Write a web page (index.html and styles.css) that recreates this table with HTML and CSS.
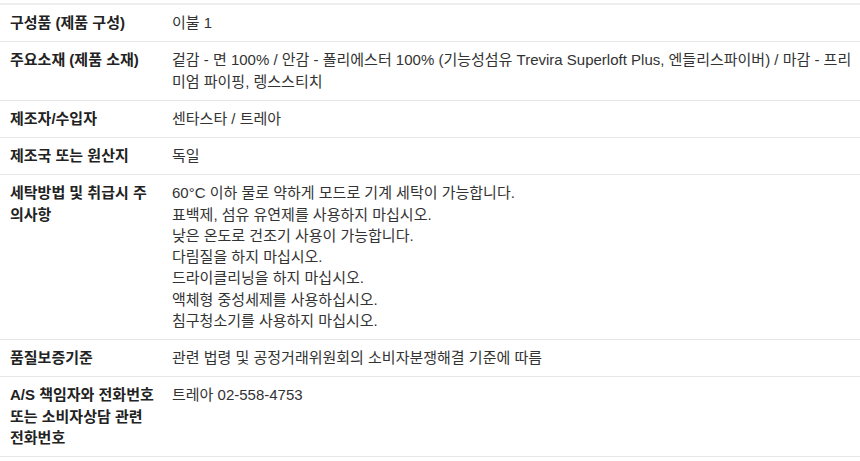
FILE: index.html
```html
<!DOCTYPE html>
<html lang="ko">
<head>
<meta charset="utf-8">
<link rel="stylesheet" href="styles.css">
</head>
<body>
<table class="spec">
  <tbody>
    <tr><th>구성품 (제품 구성)</th><td>이불 1</td></tr>
    <tr><th>주요소재 (제품 소재)</th><td>겉감 - 면 100% / 안감 - 폴리에스터 100% (기능성섬유 Trevira Superloft Plus, 엔들리스파이버) / 마감 - 프리미엄 파이핑, 렝스스티치</td></tr>
    <tr><th>제조자/수입자</th><td>센타스타 / 트레아</td></tr>
    <tr><th>제조국 또는 원산지</th><td>독일</td></tr>
    <tr><th>세탁방법 및 취급시 주의사항</th><td>60°C 이하 물로 약하게 모드로 기계 세탁이 가능합니다.<br>표백제, 섬유 유연제를 사용하지 마십시오.<br>낮은 온도로 건조기 사용이 가능합니다.<br>다림질을 하지 마십시오.<br>드라이클리닝을 하지 마십시오.<br>액체형 중성세제를 사용하십시오.<br>침구청소기를 사용하지 마십시오.</td></tr>
    <tr><th>품질보증기준</th><td>관련 법령 및 공정거래위원회의 소비자분쟁해결 기준에 따름</td></tr>
    <tr><th>A/S 책임자와 전화번호 또는 소비자상담 관련 전화번호</th><td>트레아 02-558-4753</td></tr>
  </tbody>
</table>
</body>
</html>
```
FILE: styles.css
```css
html, body {
  margin: 0;
  padding: 0;
  background: #fff;
}
body {
  padding-top: 3px;
  font-family: "Liberation Sans", Arial, "Noto Sans CJK KR", sans-serif;
  font-size: 15px;
  line-height: 21.25px;
  color: #333;
}
.spec {
  width: 100%;
  border-collapse: collapse;
  border-top: 2px solid #eeeeee;
}
.spec th,
.spec td {
  text-align: left;
  vertical-align: top;
  padding: 7px 10px 8px 10px;
  border-bottom: 1px solid #e6e6e6;
}
.spec th {
  width: 148px;
  padding-right: 14px;
  font-weight: bold;
  color: #222;
}
.spec td {
  padding-left: 0;
  padding-right: 4px;
}
```
